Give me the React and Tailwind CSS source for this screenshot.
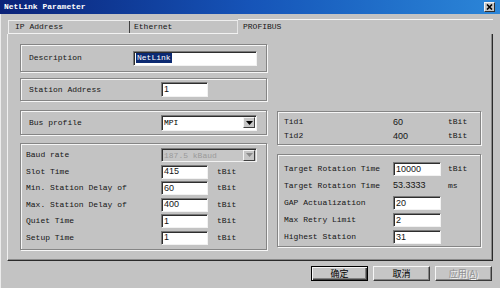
import React from 'react';

const mono = "font-['Liberation_Mono',monospace]";
const sans = "font-['Liberation_Sans',Arial,sans-serif]";

// etched group frame like the classic win32 groupbox
const Group = ({ className = '', children }) => (
  <div className={`border border-[#858585] shadow-[inset_1px_1px_0_#f6f6f6,1px_1px_0_#f6f6f6] ${className}`}>
    {children}
  </div>
);

const Field = ({ className = '', children, num }) => (
  <div
    className={`flex items-center bg-white border border-t-[#7a7a7a] border-l-[#7a7a7a] border-b-[#f2f2f2] border-r-[#f2f2f2] shadow-[inset_1px_1px_0_#2e2e2e] pl-[2px] leading-none ${num ? `${sans} text-[9px]` : ''} ${className}`}
  >
    {children}
  </div>
);

const Combo = ({ className = '', value, disabled }) => (
  <div
    className={`flex items-center border border-t-[#7a7a7a] border-l-[#7a7a7a] border-b-[#f2f2f2] border-r-[#f2f2f2] shadow-[inset_1px_1px_0_#2e2e2e] pl-[2px] pr-[1px] ${disabled ? 'bg-[#c6c6c6] text-[#9a9a9a]' : 'bg-white text-black'} ${className}`}
  >
    <span className="flex-1 leading-none pt-[1px]">{value}</span>
    <div className="w-[12px] h-[11px] bg-[#c6c6c6] border border-t-[#f4f4f4] border-l-[#f4f4f4] border-b-[#404040] border-r-[#404040] flex items-center justify-center">
      <svg width="7" height="4" viewBox="0 0 7 4">
        <path d="M0 0h7L3.5 4z" fill={disabled ? '#8a8a8a' : '#000'} />
      </svg>
    </div>
  </div>
);

const Btn = ({ children, def, disabled }) => (
  <div
    className={`w-[57px] h-[15px] flex items-center justify-center bg-[#c6c6c6] border ${def ? 'border-black' : 'border-t-[#f6f6f6] border-l-[#f6f6f6] border-b-[#3a3a3a] border-r-[#3a3a3a]'} ${def ? 'shadow-[inset_1px_1px_0_#f6f6f6,inset_-1px_-1px_0_#404040,inset_-2px_-2px_0_#808080]' : 'shadow-[inset_-1px_-1px_0_#858585]'} font-['Noto_Sans_CJK_SC',sans-serif] text-[9px] leading-none ${disabled ? 'text-[#8e8e8e] [text-shadow:1px_1px_0_#f4f4f4]' : 'text-black'}`}
  >
    {children}
  </div>
);

const Row = ({ label, labelW, children }) => (
  <div className="flex items-center h-[14px]">
    <span className={`${labelW} shrink-0`}>{label}</span>
    {children}
  </div>
);

export default function App() {
  return (
    <div className={`w-[500px] h-[288px] overflow-hidden bg-[#c3c3c3] shadow-[inset_1px_0_0_#ececec] ${mono} text-[8px] text-[#151515]`}>
      {/* Title bar */}
      <div className="h-[14px] flex items-center bg-linear-to-r from-[#0b2278] via-[#1654b8] to-[#2c86d8]">
        <span className="pl-[4px] text-white font-bold leading-none">NetLink Parameter</span>
        <div className="ml-auto mr-[5px] w-[11px] h-[10px] bg-[#c6c6c6] border border-t-[#f4f4f4] border-l-[#f4f4f4] border-b-[#303030] border-r-[#303030] flex items-center justify-center">
          <svg width="7" height="6" viewBox="0 0 7 6">
            <path d="M1 0.5l5 5M6 0.5l-5 5" stroke="#000" strokeWidth="1.6" />
          </svg>
        </div>
      </div>

      <div className="pl-[7px] pr-[7px]">
        {/* Tabs */}
        <div className="h-[20px] flex items-end">
          <div className="flex h-[14px] border-t border-l border-t-[#eeeeee] border-l-[#eeeeee] border-b border-b-[#f2f2f2] ml-[1px]">
            <div className="w-[121px] pl-[6px] flex items-center border-r border-r-[#404040]">IP Address</div>
            <div className="w-[108px] pl-[4px] flex items-center border-r border-r-[#e6e6e6]">Ethernet</div>
          </div>
          <div className="flex-1 h-[15px] border-t border-t-[#f6f6f6] pl-[5px] pt-[3px] leading-none">PROFIBUS</div>
        </div>

        {/* Tab page */}
        <div className="h-[227px] border-l border-l-[#f0f0f0] border-r border-r-[#2a2a2a] border-b border-b-[#2a2a2a] shadow-[inset_-1px_-1px_0_#8a8a8a] flex pl-[12px] pt-[10px] gap-[10px]">
          {/* left column */}
          <div className="w-[247px] flex flex-col">
            <Group className="h-[28px] flex items-center pl-[8px]">
              <span className="w-[104px] shrink-0">Description</span>
              <Field className="w-[124px] h-[15px]">
                <span className="bg-[#0c2a72] text-white px-[1px] leading-[10px]">NetLink</span>
              </Field>
            </Group>
            <Group className="h-[23px] mt-[6px] flex items-center pl-[8px]">
              <span className="w-[132px] shrink-0">Station Address</span>
              <Field num className="w-[47px] h-[15px]">1</Field>
            </Group>
            <Group className="h-[25px] mt-[9px] flex items-center pl-[8px]">
              <span className="w-[132px] shrink-0">Bus profile</span>
              <Combo className="w-[96px] h-[16px]" value="MPI" />
            </Group>
            <Group className="h-[107px] mt-[8px] pl-[5px] pt-[4px] flex flex-col gap-[2.6px]">
              <Row label="Baud rate" labelW="w-[135px]">
                <Combo className="w-[96px] h-[14px]" value="187.5 kBaud" disabled />
              </Row>
              {[
                ['Slot Time', '415'],
                ['Min. Station Delay of', '60'],
                ['Max. Station Delay of', '400'],
                ['Quiet Time', '1'],
                ['Setup Time', '1'],
              ].map(([l, v]) => (
                <Row key={l} label={l} labelW="w-[135px]">
                  <Field num className="w-[47px] h-[14px]">{v}</Field>
                  <span className="ml-[9px]">tBit</span>
                </Row>
              ))}
            </Group>
          </div>

          {/* right column */}
          <div className="w-[204px] flex flex-col">
            <Group className="h-[34px] mt-[67px] pl-[6px] pt-[3px] flex flex-col gap-[1px]">
              <div className="flex h-[13px] items-center">
                <span className="w-[109px]">Tid1</span>
                <span className={`w-[55px] ${sans} text-[9px] pt-[3px]`}>60</span>
                <span>tBit</span>
              </div>
              <div className="flex h-[13px] items-center">
                <span className="w-[109px]">Tid2</span>
                <span className={`w-[55px] ${sans} text-[9px] pt-[3px]`}>400</span>
                <span>tBit</span>
              </div>
            </Group>
            <Group className="h-[93px] mt-[9px] pl-[6px] pt-[7px] flex flex-col gap-[3px]">
              <Row label="Target Rotation Time" labelW="w-[109px]">
                <Field num className="w-[48px] h-[14px]">10000</Field>
                <span className="ml-[7px]">tBit</span>
              </Row>
              <Row label="Target Rotation Time" labelW="w-[109px]">
                <span className={`w-[55px] ${sans} text-[9px]`}>53.3333</span>
                <span>ms</span>
              </Row>
              {[
                ['GAP Actualization', '20'],
                ['Max Retry Limit', '2'],
                ['Highest Station', '31'],
              ].map(([l, v]) => (
                <Row key={l} label={l} labelW="w-[109px]">
                  <Field num className="w-[48px] h-[14px]">{v}</Field>
                </Row>
              ))}
            </Group>
          </div>
        </div>

        {/* Buttons */}
        <div className="flex justify-end gap-[5px] mt-[5px] pr-[1px]">
          <Btn def>确定</Btn>
          <Btn>取消</Btn>
          <Btn disabled>
            应用(<span className="underline">A</span>)
          </Btn>
        </div>
      </div>
    </div>
  );
}
